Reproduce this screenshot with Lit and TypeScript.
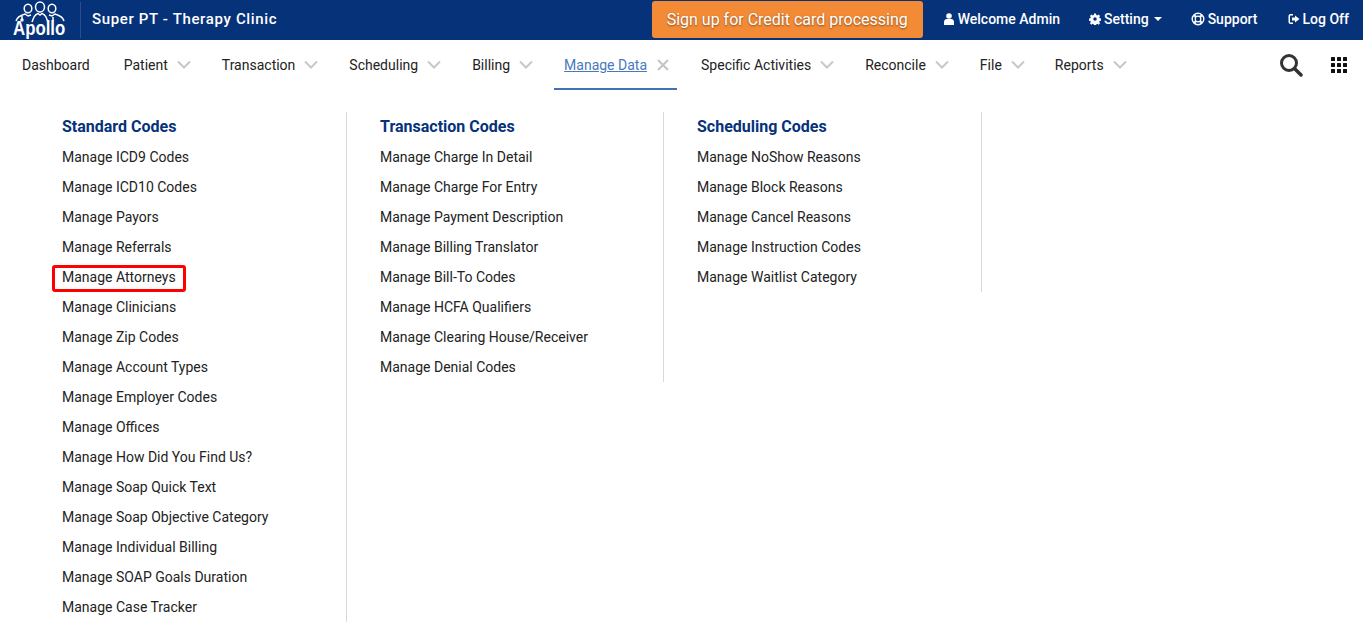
import { LitElement, html, css, svg } from "lit";
import { customElement } from "lit/decorators.js";

const columns = [
  { title: "Standard Codes", items: ["Manage ICD9 Codes","Manage ICD10 Codes","Manage Payors","Manage Referrals","Manage Attorneys","Manage Clinicians","Manage Zip Codes","Manage Account Types","Manage Employer Codes","Manage Offices","Manage How Did You Find Us?","Manage Soap Quick Text","Manage Soap Objective Category","Manage Individual Billing","Manage SOAP Goals Duration","Manage Case Tracker"] },
  { title: "Transaction Codes", items: ["Manage Charge In Detail","Manage Charge For Entry","Manage Payment Description","Manage Billing Translator","Manage Bill-To Codes","Manage HCFA Qualifiers","Manage Clearing House/Receiver","Manage Denial Codes"] },
  { title: "Scheduling Codes", items: ["Manage NoShow Reasons","Manage Block Reasons","Manage Cancel Reasons","Manage Instruction Codes","Manage Waitlist Category"] },
];
const nav: [string, string][] = [["Dashboard",""],["Patient","c"],["Transaction","c"],["Scheduling","c"],["Billing","c"],["Manage Data","x"],["Specific Activities","c"],["Reconcile","c"],["File","c"],["Reports","c"]];

const chevron = html`<svg class="ni" viewBox="0 0 14 14"><path d="M1 3.500 7 9.500 13 3.500" fill="none" stroke="#c8c8c8" stroke-width="2"/></svg>`;
const cross = html`<svg class="ni" viewBox="0 0 14 14"><path d="M2 2 12 12M12 2 2 12" fill="none" stroke="#c4c4c4" stroke-width="2"/></svg>`;

const logo = html`<svg class="logo-figs" viewBox="0 0 64 22" fill="none" stroke="#fff" stroke-width="1.500">
  <ellipse cx="32" cy="6" rx="4.500" ry="5"/><ellipse cx="20" cy="7.500" rx="3.800" ry="4.300"/><ellipse cx="44" cy="7.500" rx="3.800" ry="4.300"/>
  <path d="M24 21 L26 16 C27 14 28.500 13 30 12.500 L32 14 L34 12.500 C35.500 13 37 14 38 16 L40 21"/>
  <path d="M8 20 C9 16 12 14.500 17 13 L20 15 L23 14"/>
  <path d="M56 20 C55 16 52 14.500 47 13 L44 15 L41 14"/>
  <path d="M14 15 V18"/><circle cx="14" cy="19" r="1"/><path d="M45 16 V20"/>
</svg>`;

@customElement("app-root")
export class AppRoot extends LitElement {
  static styles = css`
    :host { display: block; height: 629px; overflow: hidden; background: #fff; font-family: Roboto, "Liberation Sans", sans-serif; color: #222; font-size: 14px; }
    .top { height: 40px; background: #06327a; color: #fff; display: flex; align-items: center; }
    .logo { width: 81px; height: 36px; flex: none; box-sizing: border-box; border-right: 1px solid #2a4f8c; margin-right: 11px; padding-left: 8px; align-self: flex-start; margin-top: 2px; }
    .logo-figs { display: block; width: 64px; height: 22px; margin-top: -1px; }
    .logo-text { font-family: "Liberation Sans", sans-serif; font-weight: 700; font-size: 21px; line-height: 16px; margin: -3px 0 0 5px; width: 66px; transform: scaleX(.8); transform-origin: left; }
    .clinic { font-size: 15px; font-weight: 500; letter-spacing: .65px; flex: 1; margin-top: -2px; }
    .cta { width: 271px; height: 37px; box-sizing: border-box; background: #f28a36; border-radius: 3px; color: #fff; font-size: 16px; display: flex; align-items: center; justify-content: center; text-shadow: 0 1px 2px rgba(0,0,0,.45); margin: 0 20px 1px 0; }
    .tl { display: flex; align-items: center; gap: 3px; font-weight: 500; font-size: 14px; margin: -2px 29px 0 0; }
    .tl:nth-child(6) { margin-right: 30px; }
    .tl:last-child { margin-right: 14px; }
    .tl svg { width: 12px; height: 12px; fill: #fff; }
    .tl .lb { width: 14px; height: 14px; fill: none; stroke: #fff; }
    .caret { width: 0; height: 0; border-left: 4px solid transparent; border-right: 4px solid transparent; border-top: 4px solid #fff; margin-left: 2px; }
    .nav { height: 50px; display: flex; align-items: stretch; padding-left: 22px; }
    .ni-item { display: flex; align-items: center; gap: 9px; height: 50px; box-sizing: border-box; margin-right: 31px; padding-top: 1px; border-bottom: 2px solid transparent; }
    .ni-item:first-child { margin-right: 34px; }
    .ni-item:nth-child(9) { margin-right: 30px; }
    .ni { width: 14px; height: 14px; }
    .active { color: #4a78bd; border-bottom-color: #3f73b8; padding: 1px 7px 0 10px; margin: 0 24px 0 -10px; }
    .active span { text-decoration: underline; }
    .tools { margin-left: auto; display: flex; align-items: center; gap: 28px; padding-right: 16px; }
    .search { width: 24px; height: 24px; }
    .grid { width: 16px; height: 16px; }
    .menu { display: flex; align-items: flex-start; padding: 22px 0 0 28px; }
    .col { width: 319px; box-sizing: border-box; border-right: 1px solid #d9d9d9; padding-left: 34px; }
    .col:nth-child(2) { width: 317px; padding-left: 33px; }
    .col:nth-child(3) { width: 318px; padding-left: 33px; }
    h3 { margin: 0; font-size: 16px; font-weight: 700; color: #06327a; line-height: 30px; height: 30px; }
    ul { list-style: none; margin: 0; padding: 0; }
    li { height: 30px; line-height: 30px; color: #222; white-space: nowrap; position: relative; }
    .hl::before { content: ""; position: absolute; left: -10px; top: 3px; width: 134px; height: 27px; box-sizing: border-box; border: 3px solid #f00; border-radius: 3px; }
  `;

  render() {
    return html`
      <div class="top">
        <div class="logo">${logo}<div class="logo-text">Apollo</div></div>
        <div class="clinic">Super PT - Therapy Clinic</div>
        <div class="cta">Sign up for Credit card processing</div>
        <div class="tl"><svg viewBox="0 0 12 12"><circle cx="6" cy="3" r="2.800"/><path d="M1 12V9c0-2 1.500-3 2.500-3h5C9.500 6 11 7 11 9v3z"/></svg>Welcome Admin</div>
        <div class="tl"><svg viewBox="0 0 24 24"><path fill-rule="evenodd" d="M10 1h4l.6 3 2.100.9 2.600-1.700 2.800 2.800-1.700 2.600.9 2.100 3 .6v4l-3 .6-.9 2.100 1.700 2.600-2.800 2.800-2.600-1.700-2.100.9-.6 3h-4l-.6-3-2.100-.9-2.600 1.700-2.800-2.800 1.700-2.600-.9-2.100-3-.6v-4l3-.6.9-2.100L2 6l2.800-2.800 2.600 1.700 2.100-.9zM12 8.500a3.500 3.500 0 1 0 0 7 3.500 3.500 0 0 0 0-7z"/></svg>Setting<span class="caret"></span></div>
        <div class="tl"><svg class="lb" viewBox="0 0 14 14"><circle cx="7" cy="7" r="5.800" stroke-width="1.400"/><circle cx="7" cy="7" r="2.800" stroke-width="1.200"/><path d="M3 3 5 5M11 3 9 5M3 11 5 9M11 11 9 9" stroke-width="2.200"/></svg>Support</div>
        <div class="tl"><svg viewBox="0 0 24 24"><path fill-rule="evenodd" d="M10 2H5a4 4 0 0 0-4 4v12a4 4 0 0 0 4 4h5v-3H5a1 1 0 0 1-1-1V6a1 1 0 0 1 1-1h5zM14 5l9 7-9 7v-4H8V9h6z"/></svg>Log Off</div>
      </div>
      <div class="nav">
        ${nav.map(([t, k]) => html`<div class="ni-item ${k === "x" ? "active" : ""}"><span>${t}</span>${k === "c" ? chevron : k === "x" ? cross : ""}</div>`)}
        <div class="tools">
          <svg class="search" viewBox="0 0 24 24"><circle cx="10" cy="10" r="7.500" fill="none" stroke="#333" stroke-width="3"/><path d="M15.500 15.500 22 22" stroke="#333" stroke-width="3.500" stroke-linecap="round"/></svg>
          <svg class="grid" viewBox="0 0 16 16" fill="#111">
            ${[0,6,12].flatMap((y) => [0,6,12].map((x) => svg`<rect x=${x} y=${y} width="4" height="4" rx=".5"/>`))}
          </svg>
        </div>
      </div>
      <div class="menu">
        ${columns.map((c) => html`<div class="col"><h3>${c.title}</h3><ul>${c.items.map((i) => html`<li class=${i === "Manage Attorneys" ? "hl" : ""}>${i}</li>`)}</ul></div>`)}
      </div>`;
  }
}
